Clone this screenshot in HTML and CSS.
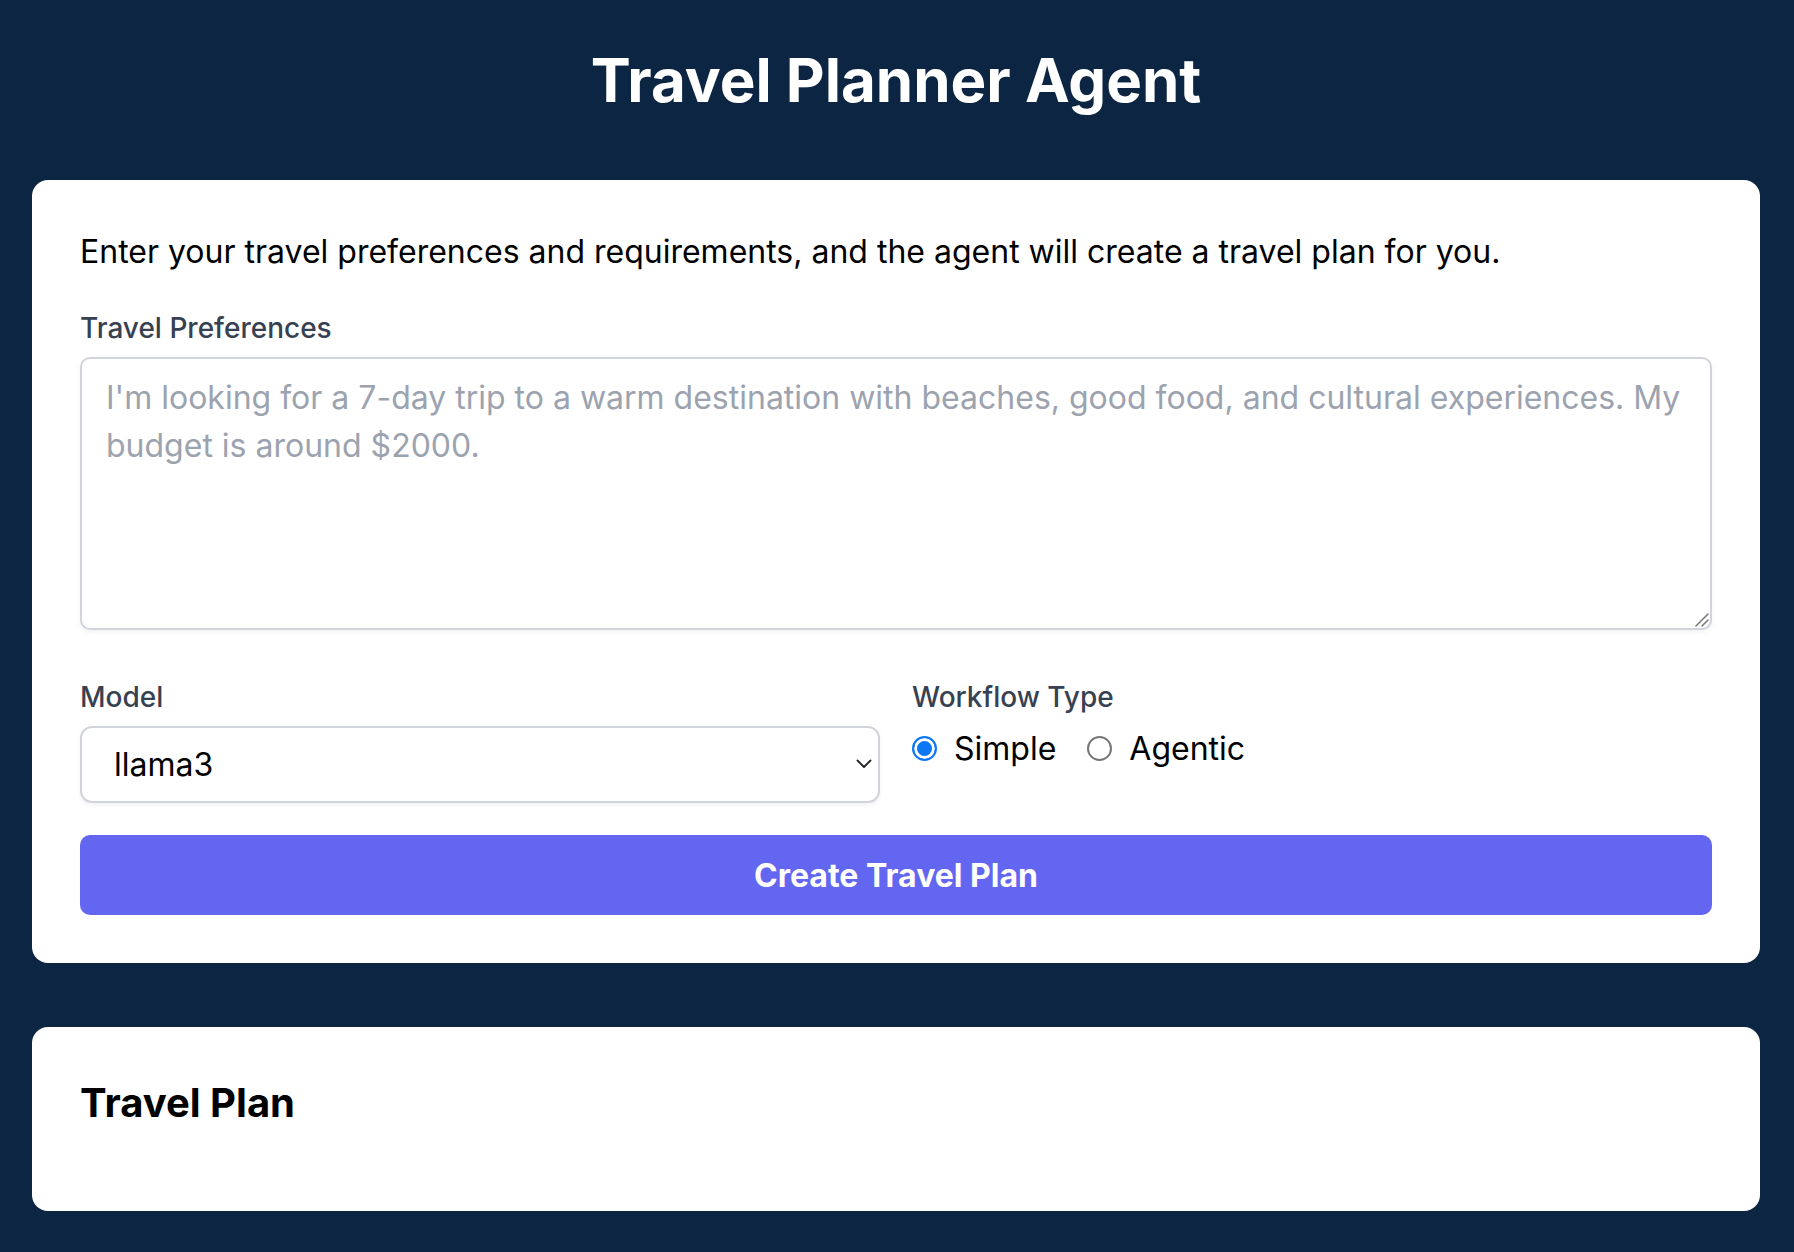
FILE: index.html
```html
<!DOCTYPE html>
<html lang="en">
<head>
<meta charset="utf-8">
<title>Travel Planner Agent</title>
<link rel="stylesheet" href="styles.css">
</head>
<body>
<div class="page">
  <header class="header">
    <h1 class="title">Travel Planner Agent</h1>
  </header>
  <main class="cards">
    <section class="card">
      <p class="intro">Enter your travel preferences and requirements, and the agent will create a travel plan for you.</p>
      <label class="label" for="prefs">Travel Preferences</label>
      <div class="textarea-wrap">
        <textarea id="prefs" class="textarea" placeholder="I'm looking for a 7-day trip to a warm destination with beaches, good food, and cultural experiences. My budget is around $2000."></textarea>
        <svg class="grip" width="14" height="14" viewBox="0 0 14 14" aria-hidden="true">
          <path d="M1 13 L13 1 M7 13 L13 7" fill="none" stroke="#7a7a7a" stroke-width="1.6" stroke-linecap="round"/>
        </svg>
      </div>
      <div class="row">
        <div class="field">
          <label class="label" for="model">Model</label>
          <div class="select-wrap">
            <select id="model" class="select">
              <option>llama3</option>
            </select>
            <svg class="chevron" width="16" height="10" viewBox="0 0 16 10" aria-hidden="true">
              <path d="M1.5 1.5 L8 8 L14.5 1.5" fill="none" stroke="#222" stroke-width="1.8" stroke-linecap="round" stroke-linejoin="round"/>
            </svg>
          </div>
        </div>
        <div class="field">
          <span class="label">Workflow Type</span>
          <div class="radios">
            <label class="radio"><input type="radio" name="wf" checked><span>Simple</span></label>
            <label class="radio"><input type="radio" name="wf"><span>Agentic</span></label>
          </div>
        </div>
      </div>
      <button class="btn" type="button">Create Travel Plan</button>
    </section>
    <section class="card">
      <h2 class="result-title">Travel Plan</h2>
    </section>
  </main>
</div>
</body>
</html>
```

FILE: styles.css
```css
* { box-sizing: border-box; }

body {
  margin: 0;
  background: #0c2542;
  font-family: Inter, "Noto Sans", "Liberation Sans", sans-serif;
  color: #000;
}

.page {
  padding: 0 34px 40px 32px;
}

.header {
  padding: 44px 0 64px;
}

.title {
  margin: 0;
  font-size: 60px;
  line-height: 72px;
  font-weight: 700;
  color: #fff;
  text-align: center;
}

.cards {
  display: flex;
  flex-direction: column;
  gap: 64px;
}

.card {
  background: #fff;
  border-radius: 16px;
  padding: 48px;
}

.intro {
  margin: 0 0 31px;
  font-size: 32px;
  line-height: 48px;
}

.label {
  display: block;
  font-size: 28px;
  font-weight: 500;
  line-height: 42px;
  color: #374151;
  margin-bottom: 8px;
}

.textarea-wrap {
  position: relative;
}

.textarea {
  display: block;
  width: 100%;
  height: 273px;
  border: 2px solid #d1d5db;
  border-radius: 10px;
  padding: 15px 24px 14px;
  font-family: inherit;
  font-size: 32px;
  line-height: 48px;
  color: #111;
  box-shadow: 0 2px 4px rgba(0, 0, 0, 0.06);
  resize: none;
  outline: none;
}

.textarea::placeholder {
  color: #9ca3af;
}

.grip {
  position: absolute;
  right: 3px;
  bottom: 3px;
  pointer-events: none;
}

.row {
  display: grid;
  grid-template-columns: 1fr 1fr;
  gap: 32px;
  margin-top: 46px;
}

.select-wrap {
  position: relative;
}

.select {
  appearance: none;
  -webkit-appearance: none;
  display: block;
  width: 100%;
  height: 77px;
  border: 2px solid #d1d5db;
  border-radius: 12px;
  padding: 0 60px 0 32px;
  font-family: inherit;
  font-size: 32px;
  color: #000;
  background: #fff;
  box-shadow: 0 2px 4px rgba(0, 0, 0, 0.06);
  outline: none;
}

.chevron {
  position: absolute;
  right: 8px;
  top: 33px;
  pointer-events: none;
}

.radios {
  display: flex;
  align-items: center;
  gap: 31px;
  height: 44px;
}

.radio {
  display: flex;
  align-items: center;
  gap: 17px;
  font-size: 32px;
  color: #000;
}

.radio input {
  appearance: none;
  -webkit-appearance: none;
  width: 25px;
  height: 25px;
  margin: 0;
  border-radius: 50%;
  border: 2px solid #767676;
  background: #fff;
}

.radio input:checked {
  border-color: #0b77f5;
  background: #0b77f5;
  box-shadow: inset 0 0 0 3px #fff;
}

.btn {
  display: block;
  width: 100%;
  height: 80px;
  margin-top: 32px;
  border: 0;
  border-radius: 10px;
  background: #6366f1;
  color: #fff;
  font-family: inherit;
  font-size: 32px;
  font-weight: 700;
}

.result-title {
  margin: 0 0 32px;
  font-size: 40px;
  line-height: 56px;
  font-weight: 700;
}
```
